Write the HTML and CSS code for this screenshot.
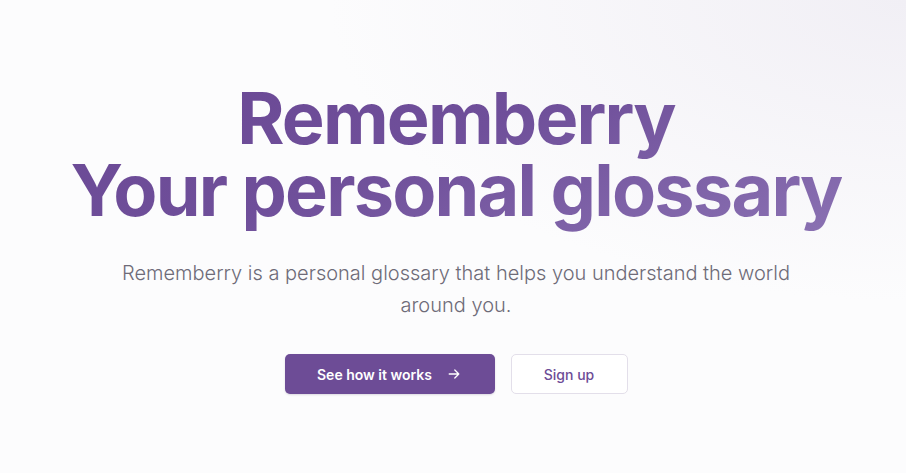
FILE: index.html
```html
<!DOCTYPE html>
<html lang="en">
<head>
    <meta charset="UTF-8">
    <title>Rememberry</title>
    <link rel="stylesheet" href="styles.css">
</head>
<body>
    <section class="hero">
        <h1 class="hero-title">Rememberry<br>Your personal glossary</h1>
        <p class="hero-text">Rememberry is a personal glossary that helps you understand the world around you.</p>
        <div class="hero-actions">
            <a href="#how" class="btn btn-primary">
                See how it works
                <svg class="btn-icon" viewBox="0 0 20 20" width="16" height="16" fill="none" stroke="currentColor" stroke-width="1.6" stroke-linecap="round" stroke-linejoin="round">
                    <path d="M4 10h12M11 5l5 5-5 5"/>
                </svg>
            </a>
            <a href="#signup" class="btn btn-secondary">Sign up</a>
        </div>
    </section>
</body>
</html>
```

FILE: styles.css
```css
html, body {
    margin: 0;
    height: 100%;
}
body {
    font-family: Inter, "Noto Sans", sans-serif;
    background-color: #fcfcfd;
    background-image: radial-gradient(ellipse at 100% 0%, #f1eff5 0%, rgba(252, 252, 253, 0) 45%);
}
.hero {
    display: flex;
    flex-direction: column;
    align-items: center;
    padding: 82px 0 0 6px;
    text-align: center;
}
/* extra bottom padding keeps the clipped gradient under the descenders */
.hero-title {
    margin: 0;
    padding-bottom: 12px;
    font-size: 72px;
    font-weight: 700;
    line-height: 72px;
    letter-spacing: -0.025em;
    background: linear-gradient(160deg, #6a4894 0%, #6f4f9a 45%, #8b72b3 100%);
    -webkit-background-clip: text;
    background-clip: text;
    color: transparent;
}
.hero-text {
    max-width: 680px;
    margin: 19px 0 0;
    font-size: 20px;
    font-weight: 300;
    line-height: 32px;
    color: #6e6b78;
}
.hero-actions {
    display: flex;
    gap: 16px;
    margin-top: 33px;
}
.btn {
    display: flex;
    align-items: center;
    justify-content: center;
    height: 40px;
    box-sizing: border-box;
    border-radius: 5px;
    font-size: 14px;
    font-weight: 600;
    text-decoration: none;
}
.btn-primary {
    width: 210px;
    gap: 14px;
    background-color: #6d4c96;
    color: #fff;
    box-shadow: 0 1px 2px rgba(40, 20, 70, 0.15);
}
.btn-secondary {
    width: 117px;
    background-color: #fff;
    border: 1px solid #e3dfea;
    color: #6d4c96;
    font-weight: 500;
}
.btn-icon {
    flex-shrink: 0;
}
```
